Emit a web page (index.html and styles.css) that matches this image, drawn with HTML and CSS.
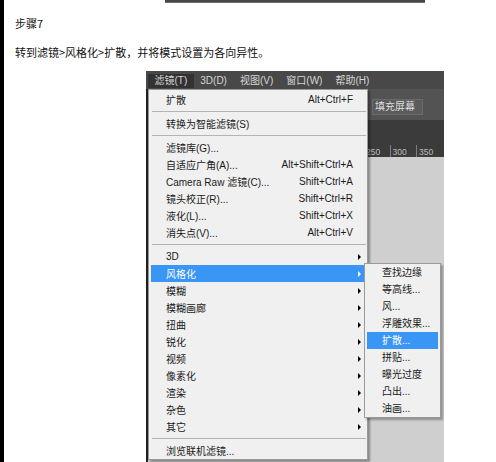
FILE: index.html
```html
<!DOCTYPE html>
<html lang="zh-CN">
<head>
<meta charset="utf-8">
<title>步骤7</title>
<link rel="stylesheet" href="styles.css">
</head>
<body>
<div class="page">
  <div class="rail"></div>
  <div class="content">
    <div class="topbar"></div>
    <p class="title">步骤7</p>
    <p class="desc">转到滤镜&gt;风格化&gt;扩散，并将模式设置为各向异性。</p>
    <div class="shot">
      <div class="ps-menubar">
        <span class="mb-item active">滤镜(T)</span>
        <span class="mb-item">3D(D)</span>
        <span class="mb-item">视图(V)</span>
        <span class="mb-item">窗口(W)</span>
        <span class="mb-item">帮助(H)</span>
      </div>
      <div class="ps-work">
        <div class="ps-side"></div>
        <div class="ps-main">
          <div class="ps-options"><span class="btn">填充屏幕</span></div>
          <div class="ps-tabs"></div>
          <div class="ps-ruler">
            <span class="tick">250</span>
            <span class="tick">300</span>
            <span class="tick">350</span>
          </div>
          <div class="ps-canvas"></div>
        </div>
      </div>

      <div class="menu">
        <div class="mi"><span class="label">扩散</span><span class="key">Alt+Ctrl+F</span><span class="arr"></span></div>
        <div class="sep"></div>
        <div class="mi"><span class="label">转换为智能滤镜(S)</span><span class="arr"></span></div>
        <div class="sep"></div>
        <div class="mi"><span class="label">滤镜库(G)...</span><span class="arr"></span></div>
        <div class="mi"><span class="label">自适应广角(A)...</span><span class="key">Alt+Shift+Ctrl+A</span><span class="arr"></span></div>
        <div class="mi"><span class="label">Camera Raw 滤镜(C)...</span><span class="key">Shift+Ctrl+A</span><span class="arr"></span></div>
        <div class="mi"><span class="label">镜头校正(R)...</span><span class="key">Shift+Ctrl+R</span><span class="arr"></span></div>
        <div class="mi"><span class="label">液化(L)...</span><span class="key">Shift+Ctrl+X</span><span class="arr"></span></div>
        <div class="mi"><span class="label">消失点(V)...</span><span class="key">Alt+Ctrl+V</span><span class="arr"></span></div>
        <div class="sep"></div>
        <div class="mi"><span class="label">3D</span><span class="arr sub"></span></div>
        <div class="mi hl"><span class="label">风格化</span><span class="arr sub"></span></div>
        <div class="mi"><span class="label">模糊</span><span class="arr sub"></span></div>
        <div class="mi"><span class="label">模糊画廊</span><span class="arr sub"></span></div>
        <div class="mi"><span class="label">扭曲</span><span class="arr sub"></span></div>
        <div class="mi"><span class="label">锐化</span><span class="arr sub"></span></div>
        <div class="mi"><span class="label">视频</span><span class="arr sub"></span></div>
        <div class="mi"><span class="label">像素化</span><span class="arr sub"></span></div>
        <div class="mi"><span class="label">渲染</span><span class="arr sub"></span></div>
        <div class="mi"><span class="label">杂色</span><span class="arr sub"></span></div>
        <div class="mi"><span class="label">其它</span><span class="arr sub"></span></div>
        <div class="sep"></div>
        <div class="mi"><span class="label">浏览联机滤镜...</span><span class="arr"></span></div>
      </div>

      <div class="submenu">
        <div class="si">查找边缘</div>
        <div class="si">等高线...</div>
        <div class="si">风...</div>
        <div class="si">浮雕效果...</div>
        <div class="si hl">扩散...</div>
        <div class="si">拼贴...</div>
        <div class="si">曝光过度</div>
        <div class="si">凸出...</div>
        <div class="si">油画...</div>
      </div>
    </div>
  </div>
</div>
</body>
</html>
```

FILE: styles.css
```css
* { box-sizing: border-box; }
html, body { margin: 0; padding: 0; background: #fff; }
body {
  font-family: "Noto Sans CJK SC", sans-serif;
  width: 496px;
  height: 462px;
  overflow: hidden;
}
.page { display: flex; height: 462px; }
.rail { width: 4px; flex: none; background: #000; }
.content { flex: 1; }
.topbar {
  margin-left: 161px;
  width: 260px;
  height: 3px;
  background: #474747;
  border-bottom: 1px solid #6e6e6e;
}
.title, .desc {
  margin: 0 0 0 11px;
  font-size: 11px;
  line-height: 12px;
  color: #111;
}
.title { margin-top: 14px; }
.desc { margin-top: 17px; }

.shot {
  position: relative;
  margin-top: 13px;
  margin-left: 142px;
  width: 298px;
  height: 391px;
  overflow: hidden;
  font-family: "Liberation Sans", "Noto Sans CJK SC", sans-serif;
  font-size: 10px;
}
.ps-menubar {
  display: flex;
  height: 18px;
  padding: 3px 0 0 2px;
  background: #484848;
}
.mb-item {
  padding: 0 6.5px;
  height: 14px;
  line-height: 14px;
  color: #d6d6d6;
  white-space: nowrap;
}
.mb-item.active { background: #323232; }

.ps-work { display: flex; height: 373px; }
.ps-side { width: 2px; flex: none; background: #1f1f1f; }
.ps-main { flex: 1; display: flex; flex-direction: column; }
.ps-options {
  height: 31px;
  flex: none;
  background: #535353;
  display: flex;
  justify-content: flex-end;
  padding: 10px 21px 0 0;
}
.btn {
  height: 16px;
  width: 51px;
  border: 1px solid #6a6a6a;
  background: #5b5b5b;
  color: #dedede;
  line-height: 14px;
  padding-left: 2px;
  white-space: nowrap;
}
.ps-tabs { height: 22px; flex: none; background: #3b3b3b; }
.ps-ruler {
  height: 15px;
  flex: none;
  background: #3b3b3b;
  display: flex;
  padding: 3px 0 0 215px;
}
.tick {
  width: 26.5px;
  flex: none;
  border-left: 1px solid #7e7e7e;
  color: #bdbdbd;
  font-size: 8.5px;
  line-height: 11px;
  padding: 2px 0 0 2px;
}
.ps-canvas { flex: 1; background: #cfcfcf; }

.menu {
  position: absolute;
  left: 2px;
  top: 18px;
  width: 220px;
  background: #f0f0f0;
  border: 1px solid #9a9a9a;
  padding-top: 1px;
  box-shadow: 2px 2px 2px rgba(0, 0, 0, 0.35);
}
.mi {
  display: flex;
  align-items: center;
  height: 17px;
  margin: 0 3px 0 2px;
  padding: 0 3px 0 15px;
  color: #1a1a1a;
  white-space: nowrap;
}
.mi .label { flex: 1; }
.mi .arr {
  width: 8px;
  flex: none;
  display: flex;
  justify-content: flex-end;
}
.mi .arr.sub::after {
  content: "";
  width: 0;
  height: 0;
  border-left: 3px solid #000;
  border-top: 3px solid transparent;
  border-bottom: 3px solid transparent;
}
.mi.hl, .si.hl { background: #3a96f5; color: #fff; }
.mi.hl .arr.sub::after { border-left-color: #fff; }
.sep {
  height: 1px;
  margin: 3px 1px 3px 3px;
  background: #b4b4b4;
}

.submenu {
  position: absolute;
  left: 218px;
  top: 192px;
  width: 77px;
  background: #f0f0f0;
  border: 1px solid #9a9a9a;
  box-shadow: 2px 2px 2px rgba(0, 0, 0, 0.3);
}
.si {
  height: 17px;
  line-height: 17px;
  margin: 0 2px;
  padding-left: 15px;
  color: #1a1a1a;
  white-space: nowrap;
}
```
